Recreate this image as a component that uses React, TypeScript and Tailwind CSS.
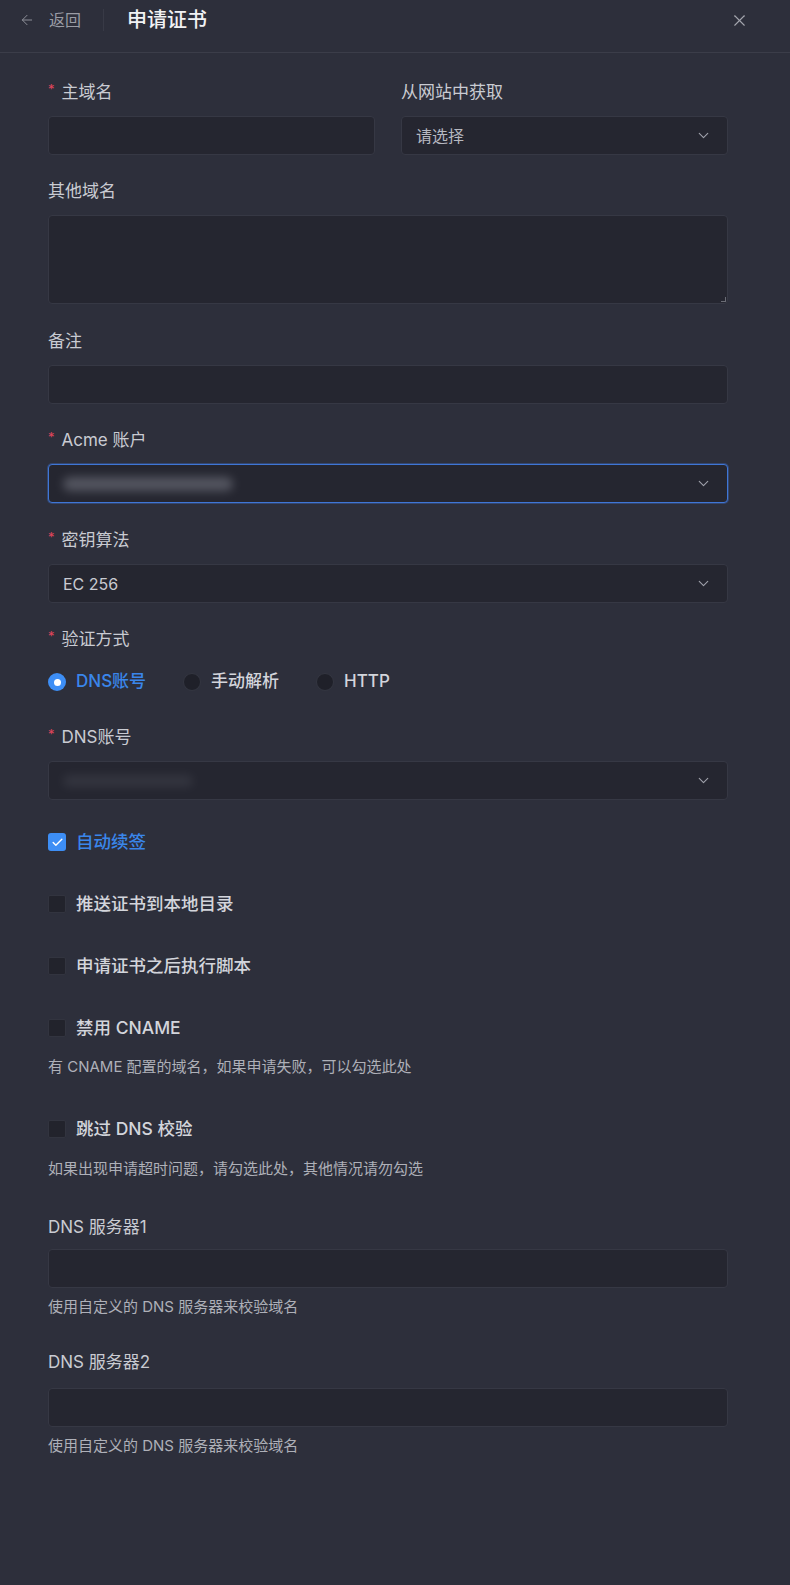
import React from "react";
import { ArrowLeft, X, ChevronDown, Check } from "lucide-react";

const FONT = { fontFamily: 'Inter, "Noto Sans CJK SC", "Noto Sans", sans-serif' };

function Label({
  required,
  children,
  mb = "mb-[12px]",
}: {
  required?: boolean;
  children: React.ReactNode;
  mb?: string;
}) {
  return (
    <div className={"flex items-center h-[24px] text-[17px] leading-[24px] text-[#c9cbd2] " + mb}>
      {required && (
        <span className="text-[#e0455c] text-[13px] leading-none self-start mt-[3px] mr-[7px]">*</span>
      )}
      <span>{children}</span>
    </div>
  );
}

function Input() {
  return <div className="h-[39px] rounded-[4px] bg-[#252630] border border-[#363844]"></div>;
}

function Select({ focused, children }: { focused?: boolean; children?: React.ReactNode }) {
  return (
    <div
      className={
        "relative h-[39px] rounded-[4px] bg-[#252630] border flex items-center justify-between pl-[14px] pr-[15px] " +
        (focused ? "border-[#3f76d6] shadow-[0_0_0_1px_rgba(63,118,214,0.35)]" : "border-[#363844]")
      }
    >
      <div className="text-[16px] text-[#c9cbd2] flex items-center">{children}</div>
      <ChevronDown size={17} strokeWidth={1.6} className="text-[#9fa1aa]" />
    </div>
  );
}

function Radio({ checked, label }: { checked?: boolean; label: string }) {
  return (
    <div className="flex items-center gap-[10px]">
      {checked ? (
        <div className="w-[18px] h-[18px] rounded-full bg-[#3d8ef5] flex items-center justify-center">
          <div className="w-[7px] h-[7px] rounded-full bg-white"></div>
        </div>
      ) : (
        <div className="w-[18px] h-[18px] rounded-full bg-[#1f2029] border border-[#343641]"></div>
      )}
      <span className={"text-[17px] font-medium " + (checked ? "text-[#3a86ea]" : "text-[#d3d5db]")}>
        {label}
      </span>
    </div>
  );
}

function CheckRow({ checked, label }: { checked?: boolean; label: string }) {
  return (
    <div className="flex items-center h-[38px] gap-[10px]">
      {checked ? (
        <div className="w-[18px] h-[18px] rounded-[3px] bg-[#3d8ef5] flex items-center justify-center">
          <Check size={13} strokeWidth={2.6} className="text-white" />
        </div>
      ) : (
        <div className="w-[18px] h-[18px] rounded-[2px] bg-[#22232c] border border-[#32343f]"></div>
      )}
      <span className={"text-[17.5px] font-medium " + (checked ? "text-[#3a86ea]" : "text-[#d3d5db]")}>
        {label}
      </span>
    </div>
  );
}

function Help({ children, className = "" }: { children: React.ReactNode; className?: string }) {
  return (
    <div
      className={
        "text-[15px] leading-[20px] text-[#aeb0b8] [text-spacing-trim:space-all] " + className
      }
    >
      {children}
    </div>
  );
}

export default function App() {
  return (
    <div className="w-[790px] min-h-[1585px] bg-[#2d2f3b]" style={FONT}>
      {/* Header */}
      <div className="h-[53px] border-b border-[#3b3d49] pb-[13px]">
        <div className="h-[40px] flex items-center pl-[19px] pr-[41px]">
          <ArrowLeft size={16} strokeWidth={1.5} className="text-[#8d8f98]" />
          <span className="ml-[14px] text-[16px] text-[#9a9ca5]">返回</span>
          <div className="ml-[22px] w-px h-[22px] bg-[#383a46]"></div>
          <span className="ml-[23px] text-[20px] font-medium text-[#f1f2f4]">申请证书</span>
          <div className="flex-1"></div>
          <X size={19} strokeWidth={1.4} className="text-[#a4a6ae]" />
        </div>
      </div>

      {/* Form */}
      <div className="pl-[48px] pr-[62px] pt-[27px] pb-[40px]">
        <div className="grid grid-cols-2 gap-x-[26px] mb-[24px]">
          <div>
            <Label required>主域名</Label>
            <Input />
          </div>
          <div>
            <Label>从网站中获取</Label>
            <Select>
              <span className="text-[#b6b8c0]">请选择</span>
            </Select>
          </div>
        </div>

        <div className="mb-[25px]">
          <Label>其他域名</Label>
          <div className="relative h-[89px] rounded-[4px] bg-[#252630] border border-[#363844]">
            <div className="absolute right-[1px] bottom-[1px] w-[5px] h-[5px] border-r border-b border-[#6b6d76]"></div>
          </div>
        </div>

        <div className="mb-[24px]">
          <Label>备注</Label>
          <Input />
        </div>

        <div className="mb-[25px]">
          <Label required>Acme 账户</Label>
          <Select focused>
            <div className="w-[170px] h-[14px] rounded-full bg-[#9a9da8] opacity-40 blur-[5px]"></div>
          </Select>
        </div>

        <div className="mb-[24px]">
          <Label required>密钥算法</Label>
          <Select>EC 256</Select>
        </div>

        <div className="mb-[24px]">
          <Label required>验证方式</Label>
          <div className="h-[38px] flex items-center gap-[37px]">
            <Radio checked label="DNS账号" />
            <Radio label="手动解析" />
            <Radio label="HTTP" />
          </div>
        </div>

        <div className="mb-[23px]">
          <Label required>DNS账号</Label>
          <Select>
            <div className="w-[130px] h-[12px] rounded-full bg-[#6f727d] opacity-20 blur-[5px]"></div>
          </Select>
        </div>

        <div className="mb-[24px]">
          <CheckRow checked label="自动续签" />
        </div>
        <div className="mb-[24px]">
          <CheckRow label="推送证书到本地目录" />
        </div>
        <div className="mb-[24px]">
          <CheckRow label="申请证书之后执行脚本" />
        </div>
        <div className="mb-[33px]">
          <CheckRow label="禁用 CNAME" />
          <Help className="mt-[10px]">有 CNAME 配置的域名，如果申请失败，可以勾选此处</Help>
        </div>
        <div className="mb-[36px]">
          <CheckRow label="跳过 DNS 校验" />
          <Help className="mt-[11px]">如果出现申请超时问题，请勾选此处，其他情况请勿勾选</Help>
        </div>

        <div className="mb-[33px]">
          <Label mb="mb-[10px]">DNS 服务器1</Label>
          <Input />
          <Help className="mt-[9px]">使用自定义的 DNS 服务器来校验域名</Help>
        </div>

        <div>
          <Label mb="mb-[14px]">DNS 服务器2</Label>
          <Input />
          <Help className="mt-[9px]">使用自定义的 DNS 服务器来校验域名</Help>
        </div>
      </div>
    </div>
  );
}
